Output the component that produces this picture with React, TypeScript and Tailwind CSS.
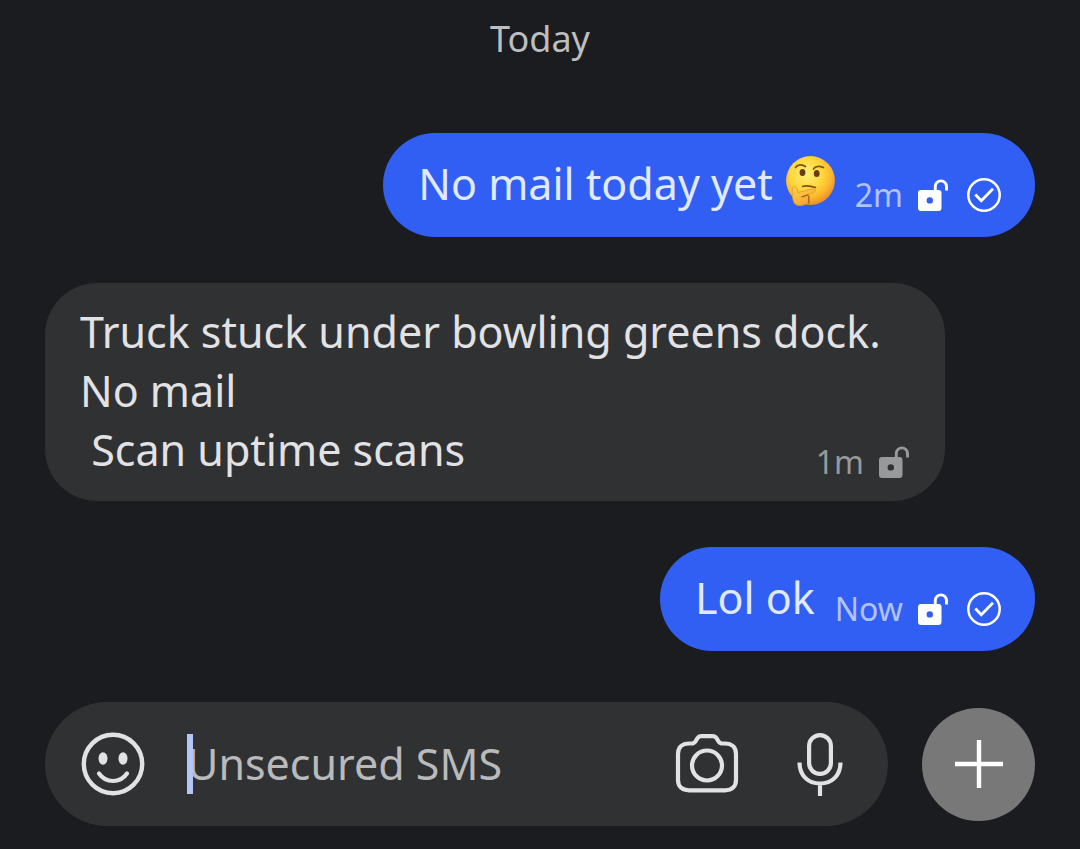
import clsx from "clsx";

type Message = {
  id: number;
  lines: string[];
  time: string;
  outgoing: boolean;
  thinking?: boolean;
};

const MESSAGES: Message[] = [
  { id: 1, lines: ["No mail today yet"], time: "2m", outgoing: true, thinking: true },
  {
    id: 2,
    lines: ["Truck stuck under bowling greens dock.", "No mail", " Scan uptime scans"],
    time: "1m",
    outgoing: false,
  },
  { id: 3, lines: ["Lol ok"], time: "Now", outgoing: true },
];

function ThinkingFace() {
  return (
    <svg viewBox="0 0 50 52" className="w-[50px] h-[52px] shrink-0 self-start" role="img" aria-label="Thinking face">
      <defs>
        <radialGradient id="face" cx="0.42" cy="0.36" r="0.64">
          <stop offset="0" stopColor="#fff07a" />
          <stop offset="0.5" stopColor="#ffd83f" />
          <stop offset="0.82" stopColor="#fbb32b" />
          <stop offset="1" stopColor="#ee902a" />
        </radialGradient>
        <linearGradient id="hand" x1="0" y1="0" x2="0.6" y2="1">
          <stop offset="0" stopColor="#ffd84d" />
          <stop offset="1" stopColor="#f5a22d" />
        </linearGradient>
      </defs>
      <circle cx="25.500" cy="26.500" r="24.400" fill="url(#face)" />
      <ellipse cx="17.500" cy="18.500" rx="2.9" ry="3.600" fill="#6b3d0c" />
      <ellipse cx="31.700" cy="19.500" rx="2.9" ry="3.600" fill="#6b3d0c" />
      <g fill="none" stroke="#86500f" strokeLinecap="round">
        <path d="M10.5 13.500C12.5 10.5 16.5 9.800 20.500 12.500" strokeWidth="1.7" />
        <path d="M28.500 15C30.500 12 34 11.500 38.500 13.500" strokeWidth="1.7" />
        <path d="M17.500 32.500C21 31.500 26 32 30.500 33.500" strokeWidth="1.6" />
      </g>
      <path
        d="M9 32.500C11.500 32.500 12.500 35 13 38.500C18 37.500 23 35.500 28.500 34.800C31 34.800 31.500 37.200 28.500 38.500L22.500 41C25 42 24.800 44 24 45.500C24 50 18 51.800 13.500 51.500C9.500 51 8 47.500 7.500 42.500C7 37.500 7 33 9 32.500Z"
        fill="url(#hand)"
        stroke="#e59428"
        strokeWidth="0.8"
      />
      <path d="M17 42.800L23 40.800M23.800 42.500V49" fill="none" stroke="#a85f18" strokeWidth="1.300" strokeLinecap="round" />
    </svg>
  );
}

function OpenLock() {
  return (
    <svg viewBox="0 0 30 32" className="w-[30px] h-[32px] shrink-0" role="img" aria-label="Unsecured">
      <path d="M17.300 12V7.500A5.600 5.600 0 0 1 28.500 7.500V11.500" fill="none" stroke="currentColor" strokeWidth="2.900" />
      <path
        fillRule="evenodd"
        fill="currentColor"
        d="M3 11H20.500A3 3 0 0 1 23.500 14V29A3 3 0 0 1 20.500 32H3A3 3 0 0 1 0 29V14A3 3 0 0 1 3 11ZM11.800 18.200A3.200 3.200 0 1 0 11.800 24.600A3.200 3.200 0 1 0 11.800 18.200Z"
      />
    </svg>
  );
}

function SentCheck() {
  return (
    <svg viewBox="0 0 34 34" className="w-[34px] h-[34px] shrink-0" fill="none" stroke="currentColor" role="img" aria-label="Sent">
      <circle cx="17" cy="17" r="15.700" strokeWidth="2.500" />
      <path d="M8.300 16.500L14.300 22.800L26 10.800" strokeWidth="2.800" />
    </svg>
  );
}

function Bubble({ lines, time, outgoing, thinking }: Message) {
  const lastLine = lines[lines.length - 1];

  return (
    <li
      className={clsx(
        "rounded-[52px] pl-[35px] whitespace-pre-wrap text-[43px] leading-[59px]",
        outgoing
          ? "self-end bg-[#315ff4] pt-[21px] pr-[34px] pb-[22px] text-[#e1e9ff]"
          : "mr-[90px] bg-[#303133] pt-[19px] pr-[36px] pb-[19px] text-[#e2e2e5]"
      )}
    >
      {lines.slice(0, -1).map((line) => (
        <p key={line}>{line}</p>
      ))}
      <div className="flex items-end justify-between gap-[20px]">
        <p className={clsx("flex items-center gap-[12px]", outgoing ? "pb-[2px]" : "pb-[3px]")}>
          {lastLine}
          {thinking && <ThinkingFace />}
        </p>
        <div
          className={clsx(
            "flex items-center text-[32px] leading-[40px]",
            outgoing ? "text-white" : "text-[#98999b]"
          )}
        >
          <time className={clsx("mr-[15px]", outgoing && "text-[#b1c3fb]")}>{time}</time>
          <OpenLock />
          {outgoing && (
            <span className="ml-[19px]">
              <SentCheck />
            </span>
          )}
        </div>
      </div>
    </li>
  );
}

function Composer() {
  return (
    <form className="mt-[51px] flex items-center gap-[34px]" onSubmit={(e) => e.preventDefault()}>
      <div className="flex h-[124px] min-w-0 flex-1 items-center rounded-full bg-[#303133] pl-[36px] pr-[45px] text-[#e2e2e5]">
        <button type="button" aria-label="Emoji" className="shrink-0">
          <svg viewBox="0 0 64 64" className="size-[64px]" fill="none" stroke="currentColor">
            <circle cx="32" cy="32" r="29.200" strokeWidth="4.400" />
            <ellipse cx="22" cy="26.500" rx="4.500" ry="6.200" fill="currentColor" stroke="none" />
            <ellipse cx="42" cy="26.500" rx="4.500" ry="6.200" fill="currentColor" stroke="none" />
            <path d="M18 41.500C25 51.500 39 51.500 46 41.500" strokeWidth="4.200" strokeLinecap="round" />
          </svg>
        </button>
        <div className="relative ml-[42px] flex min-w-0 flex-1 items-center">
          <input
            type="text"
            aria-label="Message"
            placeholder="Unsecured SMS"
            className="h-[60px] w-full bg-transparent text-[43px] leading-[60px] outline-none placeholder:text-[#b9babc]"
          />
          <span className="pointer-events-none absolute left-0 h-[60px] w-[6px] bg-[#b6c4fa]" />
        </div>
        <button type="button" aria-label="Camera" className="shrink-0">
          <svg viewBox="0 0 64 64" className="size-[64px]" fill="none" stroke="currentColor" strokeWidth="4.200">
            <path d="M14 11.500H16.500C18.500 11.500 19.500 10.800 20.500 9.300L22.500 6.200C23.500 4.700 24.500 4.200 26 4.200H38C39.500 4.200 40.500 4.700 41.500 6.200L43.500 9.300C44.500 10.800 45.500 11.500 47.500 11.500H50C57 11.500 61 15.500 61 22V48C61 54.500 57 58.300 50 58.300H14C7 58.300 3 54.500 3 48V22C3 15.500 7 11.500 14 11.500Z" />
            <circle cx="32" cy="33.500" r="15" />
          </svg>
        </button>
        <button type="button" aria-label="Record voice message" className="ml-[58px] shrink-0">
          <svg viewBox="0 0 46 64" className="h-[64px] w-[46px]" fill="none" stroke="currentColor" strokeWidth="4.200">
            <rect x="12.100" y="3.100" width="21.800" height="38.800" rx="10.900" />
            <path d="M2.500 30.500C2.500 43.500 11 51.500 23 51.500S43.500 43.500 43.500 30.500M23 51.500V64" />
          </svg>
        </button>
      </div>
      <button
        type="button"
        aria-label="Add attachment"
        className="flex size-[113px] shrink-0 items-center justify-center rounded-full bg-[#787878] text-white"
      >
        <svg viewBox="0 0 48 48" className="size-[48px]" stroke="currentColor" strokeWidth="4.400">
          <path d="M24 0V48M0 24H48" />
        </svg>
      </button>
    </form>
  );
}

export default function App() {
  return (
    <main className="min-h-screen bg-[#1b1c1f] px-[45px] pt-[12px] pb-[23px] font-['Noto_Sans',sans-serif]">
      <h1 className="text-center text-[36px] leading-[54px] text-[#bdbec0]">Today</h1>
      <ul className="mt-[67px] flex flex-col gap-[46px]">
        {MESSAGES.map((message) => (
          <Bubble key={message.id} {...message} />
        ))}
      </ul>
      <Composer />
    </main>
  );
}
